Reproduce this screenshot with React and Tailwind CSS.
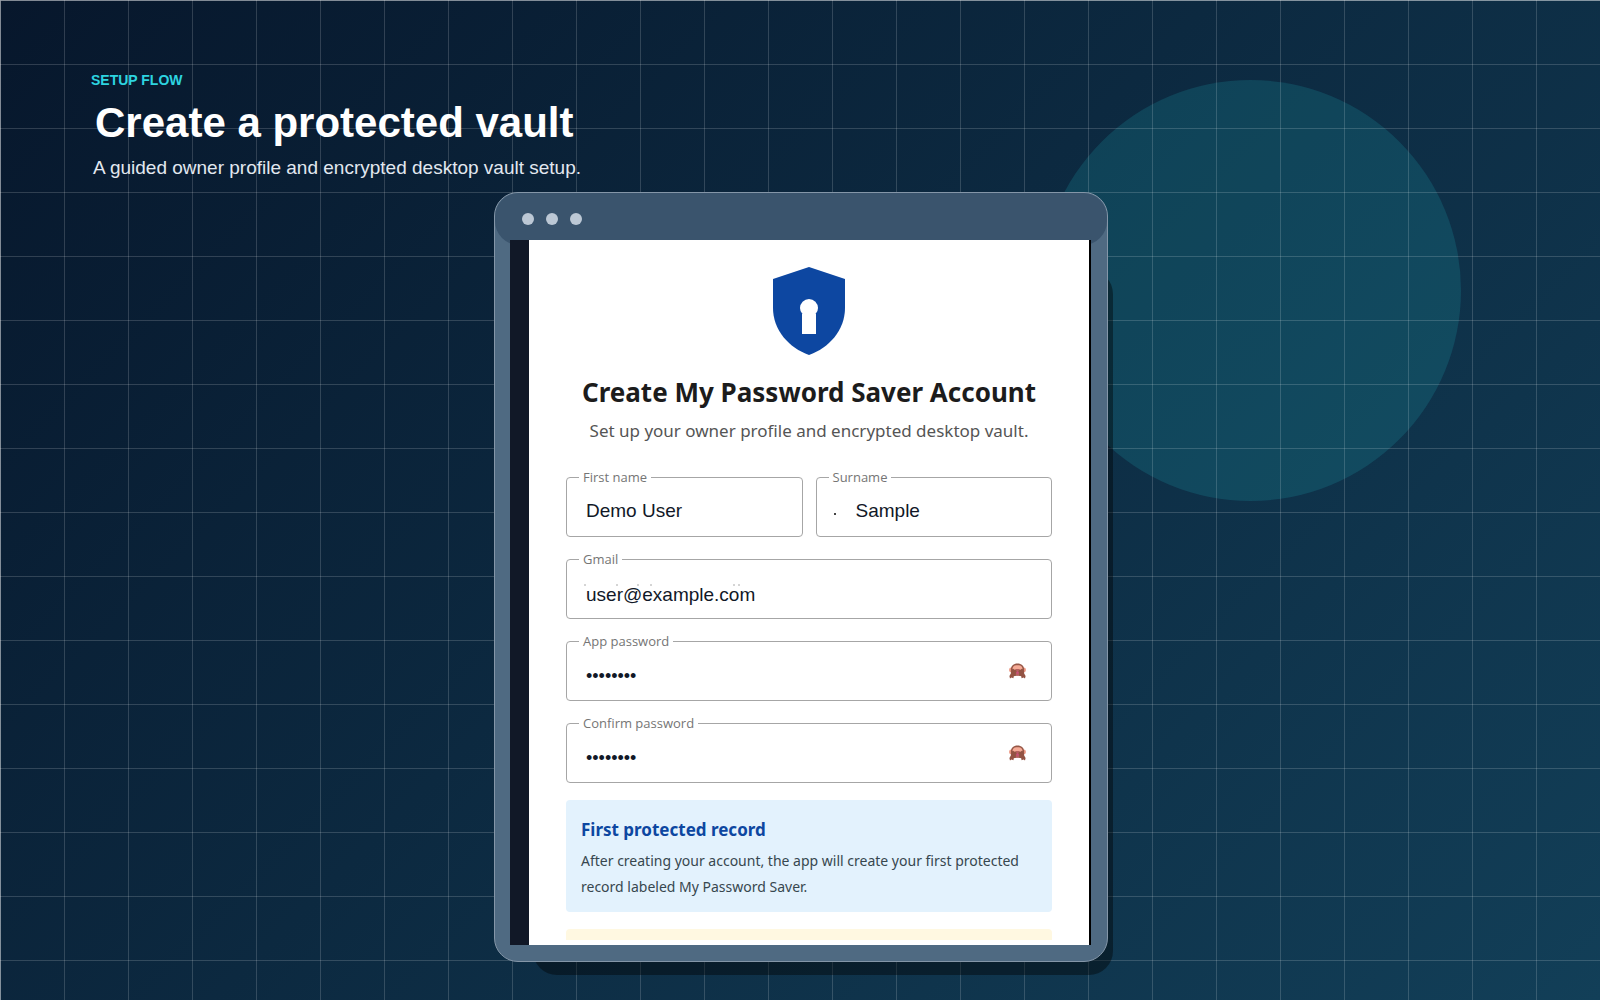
import { useState } from 'react';

const UI_FONT = "font-['Noto_Sans','Open_Sans',sans-serif]";
const LABEL_FONT = "font-['Open_Sans','Noto_Sans',sans-serif]";
const VALUE_FONT = "font-['Liberation_Sans',Arial,sans-serif]";

/**
 * Shield logo with a keyhole.
 */
function ShieldLogo() {
  return (
    <svg viewBox="0 0 74 90" className="h-[90px] w-[74px]" role="img" aria-label="My Password Saver">
      <path d="M37 1 73 13V42C73 64 57 82 37 89 17 82 1 64 1 42V13Z" fill="#0d47a1" />
      <circle cx="37" cy="42" r="9" fill="#fff" />
      <path d="M30 48h14v20H30z" fill="#fff" />
    </svg>
  );
}

/**
 * See-no-evil monkey used as the show / hide toggle.
 */
function MonkeyIcon() {
  return (
    <svg viewBox="0 0 17 16" className="h-4 w-[17px]" aria-hidden="true">
      <circle cx="2.4" cy="7" r="2.4" fill="#ee9a86" />
      <circle cx="14.6" cy="7" r="2.4" fill="#ee9a86" />
      <path d="M8.5.5C4.5.5 1.9 3 1.9 6.5V12.5H15.1V6.5C15.1 3 12.5.5 8.5.5Z" fill="#965746" />
      <path d="M8.5 2.3C5.7 1.7 3.5 3.2 3.5 5.8L5.5 9H11.5L13.5 5.8C13.5 3.2 11.3 1.7 8.5 2.3Z" fill="#f5aa96" />
      <path d="M7 6H10L11 12.8H6Z" fill="#b5605f" />
      <path d="M3 7 4.2 5.8 5.4 6.8 6.6 6.2 7.7 8.4 6.8 10.6 6.9 12.8 4.8 13.2 4.4 15.2 2.4 14.6 1 15.4.4 13 1.9 10.5Z" fill="#935343" />
      <path d="M14 7 12.8 5.8 11.6 6.8 10.4 6.2 9.3 8.4 10.2 10.6 10.1 12.8 12.2 13.2 12.6 15.2 14.6 14.6 16 15.4 16.6 13 15.1 10.5Z" fill="#935343" />
      <circle cx="8.5" cy="9.7" r="1.1" fill="#cf4a80" />
    </svg>
  );
}

function Field({ id, label, type = 'text', value, inputClass = 'pl-[19px] pt-2 text-[19px]', children }) {
  return (
    <div className="relative flex h-[60px] min-w-0 flex-1 items-stretch rounded border border-[#a6a6a6]">
      <label
        htmlFor={id}
        className={`absolute -top-[11px] left-3 bg-white px-1 text-[13px] leading-5 text-[#757575] ${LABEL_FONT}`}
      >
        {label}
      </label>
      <input
        id={id}
        type={type}
        defaultValue={value}
        className={`w-full min-w-0 flex-1 bg-transparent text-[#111827] outline-none ${VALUE_FONT} ${inputClass}`}
      />
      {children}
    </div>
  );
}

function PasswordField({ id, label }) {
  const [visible, setVisible] = useState(false);

  return (
    <div className="flex">
      <Field
        id={id}
        label={label}
        type={visible ? 'text' : 'password'}
        value="password"
        inputClass="pl-[19px] pt-2.5 text-[18px]"
      >
        <button
          type="button"
          aria-label={visible ? 'Hide password' : 'Show password'}
          onClick={() => setVisible(!visible)}
          className="mr-[25px] flex items-center"
        >
          <MonkeyIcon />
        </button>
      </Field>
    </div>
  );
}

function SetupForm() {
  return (
    <form className={`flex min-w-0 flex-1 flex-col overflow-hidden bg-white px-[37px] pt-[26px] ${UI_FONT}`}>
      <div className="flex flex-col items-center">
        <ShieldLogo />
        <h2 className="mt-4 whitespace-nowrap text-[26px] font-bold leading-10 text-[#1c1c1c]">
          Create My Password Saver Account
        </h2>
        <p className="mt-[3px] whitespace-nowrap text-[17px] leading-8 text-[#555]">
          Set up your owner profile and encrypted desktop vault.
        </p>
      </div>

      <div className="mt-[30px] flex flex-col gap-[22px]">
        <div className="flex gap-[13px]">
          <Field id="first-name" label="First name" value="Demo User" />
          <Field id="surname" label="Surname" value="Sample" inputClass="pl-[39px] pt-2 text-[19px]">
            <span className="absolute left-[17px] top-[35px] h-0.5 w-0.5 bg-[#444]" />
          </Field>
        </div>
        <div className="flex">
          <Field id="gmail" label="Gmail" value="user@example.com" inputClass="pl-[19px] pt-3 text-[19px]">
            <svg viewBox="0 0 160 2" className="absolute left-[17px] top-6 h-0.5 w-40" aria-hidden="true">
              <path d="M0 1h2M32 1h2M53 1h2M66 1h2M149 1h2M154 1h2" stroke="#aaa" strokeWidth="1" />
            </svg>
          </Field>
        </div>
        <PasswordField id="app-password" label="App password" />
        <PasswordField id="confirm-password" label="Confirm password" />
      </div>

      <section className="mt-[17px] rounded bg-[#e3f2fd] px-[15px] pb-3 pt-4">
        <h3 className="text-[17px] font-bold leading-7 text-[#0d47a1]">First protected record</h3>
        <p className="mt-1 text-[14px] leading-[26px] text-[#37474f]">
          After creating your account, the app will create your first protected record labeled My
          Password Saver.
        </p>
      </section>
      <div className="mt-[17px] h-[11px] shrink-0 rounded-t bg-[#fff8e1]" />
    </form>
  );
}

function AppWindow() {
  return (
    <div className="relative mx-auto flex w-full max-w-[616px] flex-1 pl-0.5">
      {/* Offset shadow */}
      <div className="absolute -bottom-[13px] -right-[5px] left-[41px] top-[78px] rounded-3xl bg-black/40" />

      <div className="relative flex min-w-0 flex-1 flex-col rounded-3xl border border-[#8496a8] bg-[#4f6a82] pb-4">
        <div className="flex h-[52px] items-center gap-3 rounded-3xl bg-[#3a546d] px-[27px]">
          <span className="size-3 rounded-full bg-[#bcc8d5]" />
          <span className="size-3 rounded-full bg-[#bcc8d5]" />
          <span className="size-3 rounded-full bg-[#bcc8d5]" />
        </div>
        <div className="-mt-[5px] ml-[15px] mr-4 flex flex-1 border-r-2 border-black bg-[#111827] pl-[19px]">
          <SetupForm />
        </div>
      </div>
    </div>
  );
}

export default function App() {
  return (
    <main className={`relative flex h-screen min-h-[1000px] flex-col overflow-hidden bg-linear-135 from-[#07172c] to-[#123f58] pb-[38px] ${VALUE_FONT}`}>
      {/* Backdrop: circle under the grid */}
      <div className="absolute right-[139px] top-20 size-[421px] rounded-full bg-[#1fb6c0]/18" />
      <div className="absolute inset-0 border-l border-t border-white/40 bg-[linear-gradient(to_right,rgba(255,255,255,0.16)_1px,transparent_1px),linear-gradient(to_bottom,rgba(255,255,255,0.16)_1px,transparent_1px)] bg-[size:64px_64px] bg-origin-border" />

      <header className="relative h-48 px-[91px] pt-[71px]">
        <p className="text-sm font-bold leading-[18px] text-[#2dd4e0]">SETUP FLOW</p>
        <h1 className="mt-2 pl-1 text-[42px] font-bold leading-[52px] text-white">Create a protected vault</h1>
        <p className="mt-[7px] pl-0.5 text-[19px] leading-6 text-[#e2e8f0]">
          A guided owner profile and encrypted desktop vault setup.
        </p>
      </header>

      <AppWindow />
    </main>
  );
}
